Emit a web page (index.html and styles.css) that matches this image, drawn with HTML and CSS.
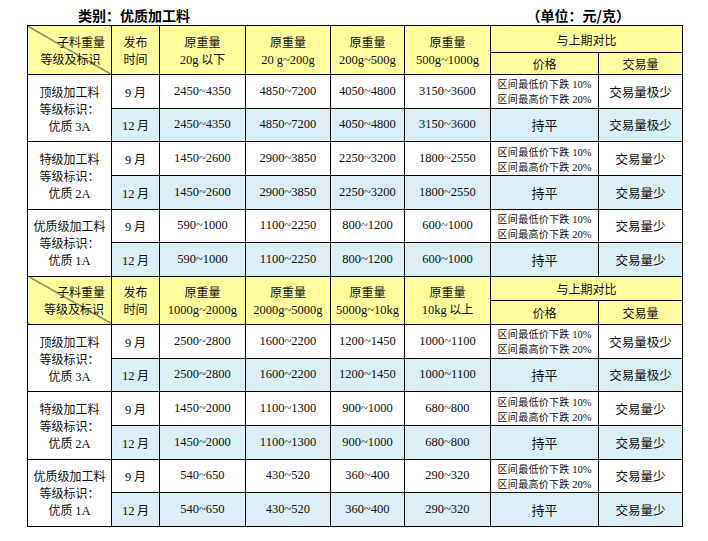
FILE: index.html
```html
<!DOCTYPE html>
<html lang="zh">
<head>
<meta charset="utf-8">
<link rel="stylesheet" href="styles.css">
</head>
<body>
<div class="page">
  <div class="titlebar">
    <span class="title">类别：优质加工料</span>
    <span class="unit">（单位：元/克）</span>
  </div>
  <table class="grid">
    <colgroup>
      <col class="c1"><col class="c2"><col class="c3"><col class="c4"><col class="c5"><col class="c6"><col class="c7"><col class="c8">
    </colgroup>
    <tbody>
      <tr class="h1">
        <td class="hd diag" rowspan="2"><div class="dtop">子料重量</div><div class="dbot">等级及标识</div></td>
        <td class="hd" rowspan="2">发布<br>时间</td>
        <td class="hd" rowspan="2">原重量<br><span class="num">20g</span> 以下</td>
        <td class="hd" rowspan="2">原重量<br><span class="num">20 g~200g</span></td>
        <td class="hd" rowspan="2">原重量<br><span class="num">200g~500g</span></td>
        <td class="hd" rowspan="2">原重量<br><span class="num">500g~1000g</span></td>
        <td class="hd" colspan="2">与上期对比</td>
      </tr>
      <tr class="h2"><td class="hd">价格</td><td class="hd">交易量</td></tr>

      <tr class="r"><td class="grade" rowspan="2">顶级加工料<br>等级标识：<br>优质 <span class="num">3A</span></td><td><span class="num">9</span> 月</td><td class="num">2450~4350</td><td class="num">4850~7200</td><td class="num">4050~4800</td><td class="num">3150~3600</td><td class="note">区间最低价下跌 <span class="num">10%</span><br>区间最高价下跌 <span class="num">20%</span></td><td class="vol">交易量极少</td></tr>
      <tr class="r b"><td><span class="num">12</span> 月</td><td class="num">2450~4350</td><td class="num">4850~7200</td><td class="num">4050~4800</td><td class="num">3150~3600</td><td class="flat">持平</td><td class="vol">交易量极少</td></tr>

      <tr class="r"><td class="grade" rowspan="2">特级加工料<br>等级标识：<br>优质 <span class="num">2A</span></td><td><span class="num">9</span> 月</td><td class="num">1450~2600</td><td class="num">2900~3850</td><td class="num">2250~3200</td><td class="num">1800~2550</td><td class="note">区间最低价下跌 <span class="num">10%</span><br>区间最高价下跌 <span class="num">20%</span></td><td class="vol">交易量少</td></tr>
      <tr class="r b"><td><span class="num">12</span> 月</td><td class="num">1450~2600</td><td class="num">2900~3850</td><td class="num">2250~3200</td><td class="num">1800~2550</td><td class="flat">持平</td><td class="vol">交易量少</td></tr>

      <tr class="r"><td class="grade" rowspan="2">优质级加工料<br>等级标识：<br>优质 <span class="num">1A</span></td><td><span class="num">9</span> 月</td><td class="num">590~1000</td><td class="num">1100~2250</td><td class="num">800~1200</td><td class="num">600~1000</td><td class="note">区间最低价下跌 <span class="num">10%</span><br>区间最高价下跌 <span class="num">20%</span></td><td class="vol">交易量少</td></tr>
      <tr class="r b"><td><span class="num">12</span> 月</td><td class="num">590~1000</td><td class="num">1100~2250</td><td class="num">800~1200</td><td class="num">600~1000</td><td class="flat">持平</td><td class="vol">交易量少</td></tr>

      <tr class="h1 h1b">
        <td class="hd diag" rowspan="2"><div class="dtop">子料重量</div><div class="dbot dbot2">等级及标识</div></td>
        <td class="hd" rowspan="2">发布<br>时间</td>
        <td class="hd" rowspan="2">原重量<br><span class="num">1000g~2000g</span></td>
        <td class="hd" rowspan="2">原重量<br><span class="num">2000g~5000g</span></td>
        <td class="hd" rowspan="2">原重量<br><span class="num">5000g~10kg</span></td>
        <td class="hd" rowspan="2">原重量<br><span class="num">10kg</span> 以上</td>
        <td class="hd" colspan="2">与上期对比</td>
      </tr>
      <tr class="h2 h2b"><td class="hd">价格</td><td class="hd">交易量</td></tr>

      <tr class="r"><td class="grade" rowspan="2">顶级加工料<br>等级标识：<br>优质 <span class="num">3A</span></td><td><span class="num">9</span> 月</td><td class="num">2500~2800</td><td class="num">1600~2200</td><td class="num">1200~1450</td><td class="num">1000~1100</td><td class="note">区间最低价下跌 <span class="num">10%</span><br>区间最高价下跌 <span class="num">20%</span></td><td class="vol">交易量极少</td></tr>
      <tr class="r b"><td><span class="num">12</span> 月</td><td class="num">2500~2800</td><td class="num">1600~2200</td><td class="num">1200~1450</td><td class="num">1000~1100</td><td class="flat">持平</td><td class="vol">交易量极少</td></tr>

      <tr class="r"><td class="grade" rowspan="2">特级加工料<br>等级标识：<br>优质 <span class="num">2A</span></td><td><span class="num">9</span> 月</td><td class="num">1450~2000</td><td class="num">1100~1300</td><td class="num">900~1000</td><td class="num">680~800</td><td class="note">区间最低价下跌 <span class="num">10%</span><br>区间最高价下跌 <span class="num">20%</span></td><td class="vol">交易量少</td></tr>
      <tr class="r b"><td><span class="num">12</span> 月</td><td class="num">1450~2000</td><td class="num">1100~1300</td><td class="num">900~1000</td><td class="num">680~800</td><td class="flat">持平</td><td class="vol">交易量少</td></tr>

      <tr class="r"><td class="grade" rowspan="2">优质级加工料<br>等级标识：<br>优质 <span class="num">1A</span></td><td><span class="num">9</span> 月</td><td class="num">540~650</td><td class="num">430~520</td><td class="num">360~400</td><td class="num">290~320</td><td class="note">区间最低价下跌 <span class="num">10%</span><br>区间最高价下跌 <span class="num">20%</span></td><td class="vol">交易量少</td></tr>
      <tr class="r b"><td><span class="num">12</span> 月</td><td class="num">540~650</td><td class="num">430~520</td><td class="num">360~400</td><td class="num">290~320</td><td class="flat">持平</td><td class="vol">交易量少</td></tr>
    </tbody>
  </table>
</div>
</body>
</html>
```

FILE: styles.css
```css
html, body {
  margin: 0;
  padding: 0;
  background: #fff;
}
body {
  font-family: "Noto Sans CJK SC", "Liberation Sans", sans-serif;
  color: #111;
}
.page {
  width: 708px;
  height: 541px;
  overflow: hidden;
}
.titlebar {
  display: flex;
  padding: 6px 78px 0 78px;
  height: 19px;
  font-weight: bold;
  font-size: 14px;
  line-height: 18px;
  color: #000;
}
.unit {
  margin-left: auto;
}
.grid {
  margin-left: 27px;
  border-collapse: collapse;
  table-layout: fixed;
  width: 656px;
  font-size: 12px;
}
.c1 { width: 84px; }
.c2 { width: 48px; }
.c3 { width: 86px; }
.c4 { width: 85px; }
.c5 { width: 74px; }
.c6 { width: 86px; }
.c7 { width: 108px; }
.c8 { width: 84px; }
.grid td {
  border: 1px solid #000;
  padding: 0;
  text-align: center;
  vertical-align: middle;
  line-height: 17px;
  overflow: hidden;
}
.num {
  font-family: "Liberation Serif", "Noto Sans CJK SC", serif;
  font-size: 12.5px;
}
.grid td span.num {
  line-height: 0;
}
.hd {
  background: #ffff9f;
}
.h1 { height: 27px; }
.h2 { height: 22px; }
.h1b { height: 24px; }
.h2b { height: 24px; }
.r { height: 33.67px; }
.b td { background: #daeef3; }
.b td.grade { background: #fff; }
.grade {
  line-height: 17px;
  background: #fff;
}
.grid td.note {
  font-size: 10px;
  line-height: 15px;
  letter-spacing: 0.3px;
}
.note .num {
  font-size: 10.5px;
  letter-spacing: 0;
}
.flat {
  font-size: 13px;
}
.vol {
  font-size: 12.5px;
}
.diag {
  background: linear-gradient(to top right, #ffff9f calc(50% - 0.7px), #000 50%, #ffff9f calc(50% + 0.7px));
  text-align: left;
}
.dtop {
  text-align: right;
  padding-right: 6px;
  line-height: 17px;
}
.dbot {
  padding-left: 2px;
  line-height: 17px;
}
.dbot2 {
  padding-left: 9px;
}
```
